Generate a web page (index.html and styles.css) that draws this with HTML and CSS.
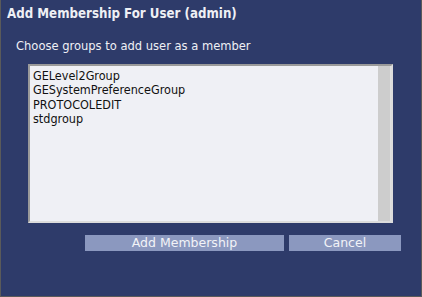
FILE: index.html
```html
<!DOCTYPE html>
<html lang="en">
<head>
    <meta charset="utf-8">
    <title>Add Membership</title>
    <link rel="stylesheet" href="styles.css">
</head>
<body>
    <div class="dialog">
        <div class="title">Add Membership For User (admin)</div>
        <div class="content">
            <p class="hint">Choose groups to add user as a member</p>
            <div class="listbox">
                <ul class="options">
                    <li>GELevel2Group</li>
                    <li>GESystemPreferenceGroup</li>
                    <li>PROTOCOLEDIT</li>
                    <li>stdgroup</li>
                </ul>
                <div class="scrollbar"></div>
            </div>
            <div class="buttons">
                <span class="btn btn-add">Add Membership</span>
                <span class="btn btn-cancel">Cancel</span>
            </div>
        </div>
    </div>
</body>
</html>
```
FILE: styles.css
```css
html, body{
    margin: 0;
    padding: 0;
}
body{
    font-family: "DejaVu Sans Condensed", "DejaVu Sans", "Liberation Sans", sans-serif;
}
.dialog{
    box-sizing: border-box;
    width: 422px;
    height: 297px;
    background: #2e3b6a;
    border-left: 1px solid #5a5a5a;
    border-right: 1px solid #5a5a5a;
    border-bottom: 1px solid #5a5a5a;
    color: #eef0f5;
}
.title{
    padding: 6px 0 0 6px;
    height: 20px;
    font-size: 13.2px;
    font-weight: bold;
    line-height: 16px;
}
.content{
    padding: 0 0 0 27px;
}
.hint{
    margin: 0;
    padding: 13px 0 0 0;
    margin-left: -12px;
    font-size: 12.8px;
    line-height: 14px;
}
.listbox{
    display: flex;
    margin-top: 11px;
    width: 365px;
    height: 159px;
    box-sizing: border-box;
    background: #eff0f5;
    border-top: 2px solid #9a9a9a;
    border-left: 2px solid #9a9a9a;
    border-bottom: 2px solid #dcdcdc;
    border-right: 2px solid #dcdcdc;
}
.options{
    flex: 1;
    margin: 0;
    padding: 3px 0 0 3px;
    list-style: none;
    color: #111;
    font-size: 12.5px;
    line-height: 14.4px;
}
.scrollbar{
    width: 12px;
    background: #cdcdcd;
    border-right: 1px solid #e0e0e0;
}
.buttons{
    display: flex;
    gap: 5px;
    margin-top: 12px;
    padding-left: 57px;
}
.btn{
    display: block;
    height: 16px;
    line-height: 16px;
    text-align: center;
    background: #8b98bf;
    color: #f2f3f7;
    font-family: "DejaVu Sans", "Liberation Sans", sans-serif;
    font-size: 12.5px;
}
.btn-add{
    width: 199px;
}
.btn-cancel{
    width: 112px;
}
```
